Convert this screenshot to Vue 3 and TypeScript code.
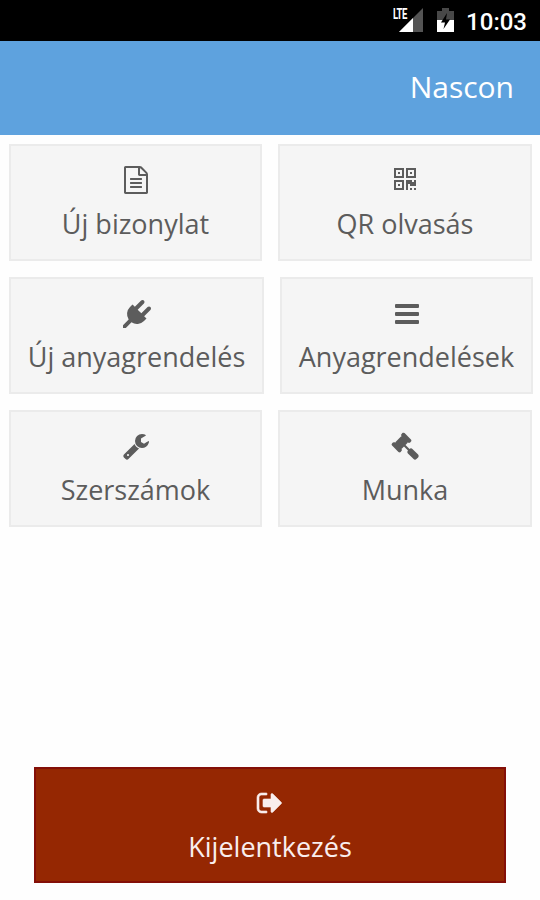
<script setup lang="ts">
interface Tile {
  id: string
  label: string
  viewBox: string
  path: string
}

const box = '0 0 1792 1792'

const rows: Tile[][] = [
  [
    {
      id: 'document',
      label: 'Új bizonylat',
      viewBox: box,
      path: 'M1596 380q28 28 48 76t20 88v1152q0 40-28 68t-68 28h-1344q-40 0-68-28t-28-68v-1600q0-40 28-68t68-28h896q40 0 88 20t76 48zm-444-244v376h376q-10-29-22-41l-313-313q-12-12-41-22zm384 1528v-1024h-416q-40 0-68-28t-28-68v-416h-768v1536h1280zm-1024-864q0-14 9-23t23-9h704q14 0 23 9t9 23v64q0 14-9 23t-23 9h-704q-14 0-23-9t-9-23v-64zm736 224q14 0 23 9t9 23v64q0 14-9 23t-23 9h-704q-14 0-23-9t-9-23v-64q0-14 9-23t23-9h704zm0 256q14 0 23 9t9 23v64q0 14-9 23t-23 9h-704q-14 0-23-9t-9-23v-64q0-14 9-23t23-9h704z',
    },
    {
      id: 'qr',
      label: 'QR olvasás',
      viewBox: '-64 0 1792 1792',
      path: 'M128 128h640v640H128zM256 256v384h384V256zM384 384h128v128H384zM896 128h640v640H896zM1024 256v384h384V256zM1152 384h128v128h-128zM128 896h640v640H128zM256 1024v384h384v-384zM384 1152h128v128H384zM896 896h384v128h128V896h128v384h-384v-128h-128v384H896zM1152 1408h128v128h-128zM1408 1408h128v128h-128z',
    },
  ],
  [
    {
      id: 'plug',
      label: 'Új anyagrendelés',
      viewBox: box,
      path: 'M1755 453q37 38 37 90.500t-37 90.500l-401 400 150 150-160 160q-163 163-389.500 186.500t-411.500-100.500l-362 362h-181v-181l362-362q-124-185-100.500-411.500t186.500-389.500l160-160 150 150 400-401q38-37 91-37t90 37 37 90.500-37 90.500l-400 401 234 234 401-400q38-37 91-37t90 37z',
    },
    {
      id: 'list',
      label: 'Anyagrendelések',
      viewBox: box,
      path: 'M192 256h1408q64 0 64 64v128q0 64-64 64H192q-64 0-64-64V320q0-64 64-64zM192 768h1408q64 0 64 64v128q0 64-64 64H192q-64 0-64-64V832q0-64 64-64zM192 1280h1408q64 0 64 64v128q0 64-64 64H192q-64 0-64-64v-128q0-64 64-64z',
    },
  ],
  [
    {
      id: 'wrench',
      label: 'Szerszámok',
      viewBox: box,
      path: 'M448 1472q0-26-19-45t-45-19-45 19-19 45 19 45 45 19 45-19 19-45zm644-420l-682 682q-37 37-90 37-52 0-91-37l-106-108q-38-36-38-90 0-53 38-91l681-681q39 98 114.500 173.500t173.500 114.500zm634-435q0 39-23 106-47 134-164.500 217.500t-258.500 83.500q-185 0-316.500-131.500t-131.500-316.500 131.500-316.500 316.500-131.500q58 0 121.500 16.500t107.500 46.500q16 11 16 28t-16 28l-293 169v224l193 107q5-3 79-48.500t135.500-81 70.500-35.500q15 0 23.500 10t8.500 25z',
    },
    {
      id: 'gavel',
      label: 'Munka',
      viewBox: box,
      path: 'M1771 1536q0 53-37 90l-107 108q-39 37-91 37-53 0-90-37l-363-364q-38-36-38-90 0-53 43-96l-256-256-126 126q-14 14-34 14t-34-14q2 2 12.500 12t12.500 13 10 11.500 10 13.500 6 13.500 5.500 16.500 1.500 18q0 38-28 68-3 3-16.500 18t-19 20.500-18.500 16.500-22 15.500-22 9-26 4.500q-40 0-68-28l-408-408q-28-28-28-68 0-13 4.500-26t9-22 15.500-22 16.500-18.500 20.500-19 18-16.500q30-28 68-28 10 0 18 1.500t16.500 5.500 13.500 6 13.500 10 11.500 10 13 12.500 12 12.500q-14-14-14-34t14-34l348-348q14-14 34-14t34 14q-2-2-12.500-12t-12.500-13-10-11.500-10-13.500-6-13.500-5.500-16.500-1.500-18q0-38 28-68 3-3 16.500-18t19-20.500 18.500-16.500 22-15.500 22-9 26-4.500q40 0 68 28l408 408q28 28 28 68 0 13-4.500 26t-9 22-15.500 22-16.500 18.500-20.500 19-18 16.500q-30 28-68 28-10 0-18-1.500t-16.500-5.500-13.500-6-13.500-10-11.500-10-13-12.500-12-12.500q14 14 14 34t-14 34l-126 126 256 256q43-43 96-43 52 0 91 37l363 363q37 39 37 91z',
    },
  ],
]

const signOut =
  'M704 1440q0 4 1 20t.5 26.500-3 23.500-10 19.500-20.500 6.500h-320q-119 0-203.500-84.500t-84.500-203.500v-704q0-119 84.500-203.500t203.500-84.500h320q13 0 22.500 9.500t9.500 22.500q0 4 1 20t.5 26.500-3 23.500-10 19.500-20.500 6.500h-320q-66 0-113 47t-47 113v704q0 66 47 113t113 47h312l11.500 1 11.500 3 8 5.500 7 9 2 13.500zm928-544q0 26-19 45l-544 544q-19 19-45 19t-45-19-19-45v-288h-448q-26 0-45-19t-19-45v-384q0-26 19-45t45-19h448v-288q0-26 19-45t45-19 45 19l544 544q19 19 19 45z'
</script>

<template>
  <div class="screen">
    <div class="status">
      <div class="signal">
        <svg width="32" height="26" viewBox="0 0 32 26">
          <path d="M31 1v24H7z" fill="#545454" />
          <path d="M21 11v14H7z" fill="#fff" />
          <path d="M0 0h17v8l-6 6H0z" fill="#000" />
        </svg>
        <span class="lte">LTE</span>
      </div>
      <svg class="battery" width="17" height="26" viewBox="0 0 17 26">
        <path d="M5 1h7v3h5v9H0V4h5z" fill="#484848" />
        <path d="M0 13h17v12H0z" fill="#fff" />
        <path d="M10 6 4 15.500h4L6.500 22 13 12.500H9z" fill="#000" />
      </svg>
      <span class="clock">10:03</span>
    </div>
    <header class="header"><h1 class="title">Nascon</h1></header>
    <main class="menu">
      <div v-for="(row, i) in rows" :key="i" class="row" :class="{ wide: i === 1 }">
        <button v-for="tile in row" :key="tile.id" class="tile" type="button">
          <svg class="icon" :viewBox="tile.viewBox"><path :d="tile.path" fill-rule="evenodd" /></svg>
          <span class="label">{{ tile.label }}</span>
        </button>
      </div>
    </main>
    <footer class="footer">
      <button class="tile logout" type="button">
        <svg class="icon" viewBox="0 0 1792 1792"><path :d="signOut" /></svg>
        <span class="label">Kijelentkezés</span>
      </button>
    </footer>
  </div>
</template>

<style>
body {
  margin: 0;
}
</style>

<style scoped>
.screen {
  display: flex;
  flex-direction: column;
  box-sizing: border-box;
  width: 540px;
  height: 900px;
  padding-bottom: 17px;
  overflow: hidden;
  background: #fefefe;
  font-family: 'Open Sans', 'Noto Sans', sans-serif;
}
.status {
  display: flex;
  flex: none;
  justify-content: flex-end;
  box-sizing: border-box;
  height: 41px;
  padding: 7px 13px 0 0;
  background: #000;
  color: #fff;
}
.signal {
  position: relative;
  width: 32px;
  height: 26px;
}
.lte {
  position: absolute;
  top: 0;
  left: 1px;
  font: 700 14px/14px 'Roboto', sans-serif;
  letter-spacing: -0.8px;
  transform: scaleX(0.68);
  transform-origin: left center;
}
.battery {
  margin: 0 12px 0 13px;
}
.clock {
  font: 500 24px/30px 'Roboto', sans-serif;
}
.header {
  display: flex;
  flex: none;
  align-items: center;
  justify-content: flex-end;
  box-sizing: border-box;
  height: 94px;
  padding: 0 26px 2px 0;
  background: #5ea2de;
}
.title {
  margin: 0;
  color: #fff;
  font-size: 30px;
  font-weight: 400;
  line-height: 40px;
}
.menu {
  display: flex;
  flex-direction: column;
  gap: 16.5px;
  padding: 9px 8px 0 9px;
}
.row {
  display: grid;
  grid-template-columns: 253px 254px;
  gap: 16px;
}
.row.wide {
  grid-template-columns: 255px 253px;
  margin-right: -2px;
}
.tile {
  display: flex;
  flex-direction: column;
  align-items: center;
  box-sizing: border-box;
  height: 116.5px;
  margin: 0;
  padding: 20px 0 0;
  border: 2px solid #ebebeb;
  border-radius: 0;
  background: #f5f5f5;
  color: #5c5c5c;
  font-family: inherit;
}
.icon {
  flex: none;
  width: 28px;
  height: 28px;
  fill: currentColor;
}
.wide .icon {
  position: relative;
  top: 0.7px;
}
.label {
  margin-top: 10px;
  font-size: 27px;
  font-weight: 400;
  line-height: 40px;
  white-space: nowrap;
}
.footer {
  display: flex;
  margin-top: auto;
  padding: 0 34px;
}
.logout {
  flex: 1;
  padding-top: 20.5px;
  border-color: #840f08;
  background: #952702;
  color: #f9eeee;
}
.logout .icon {
  stroke: currentColor;
  stroke-width: 40;
}
</style>
